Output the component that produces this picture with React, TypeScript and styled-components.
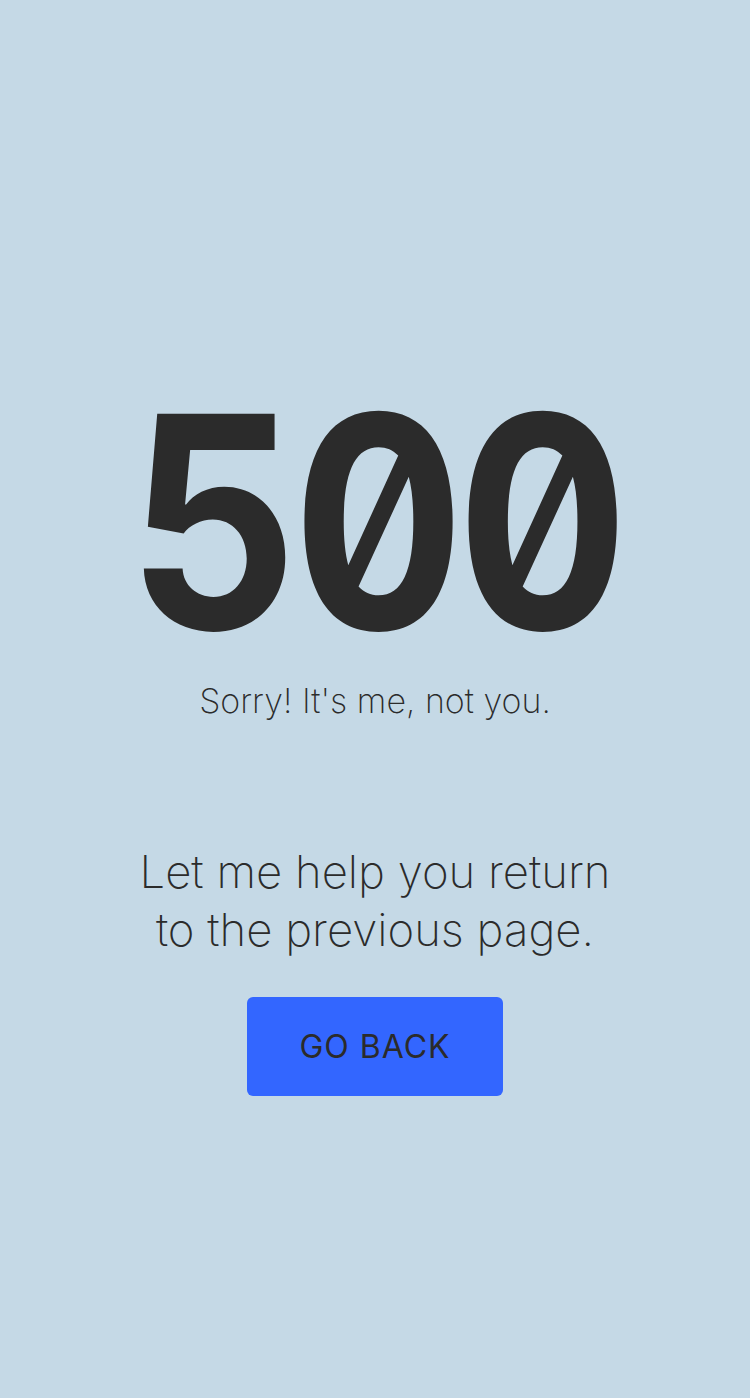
import React from "react";
import styled, { createGlobalStyle } from "styled-components";

const Global = createGlobalStyle`
  html, body { margin: 0; padding: 0; background: #c5d9e6; }
  #root { min-height: 1398px; }
`;

const Page = styled.main`
  min-height: 1398px;
  display: flex;
  flex-direction: column;
  align-items: center;
  background: #c5d9e6;
  color: #2b2b2b;
  padding-top: 401px;
  box-sizing: border-box;
`;

const Code = styled.h1`
  margin: 0;
  font-family: Inter, "DejaVu Sans", sans-serif;
  font-weight: 700;
  font-size: 296px;
  line-height: 240px;
  letter-spacing: -9px;
  font-feature-settings: "zero" 1, "tnum" 1;
  transform: scaleX(0.9);
`;

const Sub = styled.p`
  margin: 40px 0 0;
  font-family: Inter, "Liberation Sans", sans-serif;
  font-weight: 200;
  font-size: 34px;
  line-height: 40px;
`;

const Help = styled.p`
  margin: 122px 0 0;
  font-family: Inter, "Liberation Sans", sans-serif;
  font-weight: 200;
  font-size: 45.5px;
  line-height: 58px;
  text-align: center;
`;

const Button = styled.button`
  margin-top: 38px;
  width: 256px;
  height: 99px;
  border: none;
  border-radius: 6px;
  background: #3366ff;
  color: #2b2b2b;
  font-family: Inter, "Open Sans", sans-serif;
  font-weight: 400;
  font-size: 32px;
  letter-spacing: 1px;
  cursor: pointer;
`;

export default function App() {
  return (
    <>
      <Global />
      <Page>
        <Code>500</Code>
        <Sub>Sorry! It's me, not you.</Sub>
        <Help>
          Let me help you return
          <br />
          to the previous page.
        </Help>
        <Button>GO BACK</Button>
      </Page>
    </>
  );
}
